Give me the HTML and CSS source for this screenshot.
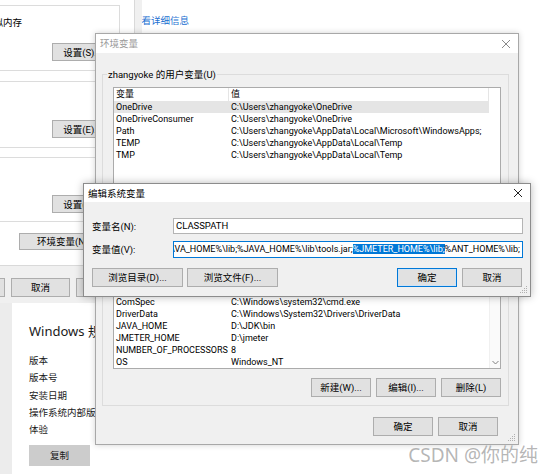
FILE: index.html
```html
<!DOCTYPE html>
<html lang="zh-CN">
<head>
<meta charset="utf-8">
<title>环境变量</title>
<link rel="stylesheet" href="styles.css">
</head>
<body>
<div class="settings">
  <div class="set-rail"></div>
  <div class="set-main">
    <span class="set-link">查看详细信息</span>
    <h2 class="set-h">Windows 规格</h2>
    <ul class="spec">
      <li>版本</li>
      <li>版本号</li>
      <li>安装日期</li>
      <li>操作系统内部版本</li>
      <li>体验</li>
    </ul>
    <div class="copy">复制</div>
  </div>
</div>

<div class="sysprops">
  <div class="sp-page">
    <div class="sp-group g1">
      <p class="sp-text">视觉效果，处理器计划，内存使用，以及虚拟内存</p>
      <div class="btn sp-btn">设置(S)...</div>
    </div>
    <div class="sp-group g2">
      <div class="btn sp-btn">设置(E)...</div>
    </div>
    <div class="sp-group g3">
      <div class="btn sp-btn">设置(T)...</div>
    </div>
    <div class="btn sp-env">环境变量(N)...</div>
  </div>
  <div class="sp-foot">
    <div class="btn">确定</div>
    <div class="btn">取消</div>
    <div class="btn">应用(A)</div>
  </div>
</div>

<div class="envdlg">
  <div class="titlebar inactive">
    <span class="ttl">环境变量</span>
    <svg class="close" width="10" height="10" viewBox="0 0 10 10"><path d="M1 1L9 9M9 1L1 9" stroke="#8a8a8a" stroke-width="1"/></svg>
  </div>
  <div class="env-body">
    <div class="grp user-grp">
      <span class="legend">zhangyoke 的用户变量(U)</span>
      <div class="lv">
        <div class="lv-row lv-head"><span class="c1">变量</span><span class="c2">值</span></div>
        <div class="lv-row sel"><span class="c1">OneDrive</span><span class="c2">C:\Users\zhangyoke\OneDrive</span></div>
        <div class="lv-row"><span class="c1">OneDriveConsumer</span><span class="c2">C:\Users\zhangyoke\OneDrive</span></div>
        <div class="lv-row"><span class="c1">Path</span><span class="c2">C:\Users\zhangyoke\AppData\Local\Microsoft\WindowsApps;</span></div>
        <div class="lv-row"><span class="c1">TEMP</span><span class="c2">C:\Users\zhangyoke\AppData\Local\Temp</span></div>
        <div class="lv-row"><span class="c1">TMP</span><span class="c2">C:\Users\zhangyoke\AppData\Local\Temp</span></div>
      </div>
    </div>
    <div class="grp sys-grp">
      <span class="legend">系统变量(S)</span>
      <div class="lv sys-lv">
        <div class="lv-rows">
          <div class="lv-row"><span class="c1">ANT_HOME</span><span class="c2">D:\ant</span></div>
          <div class="lv-row"><span class="c1">CLASSPATH</span><span class="c2">.;%JAVA_HOME%\lib;%JAVA_HOME%\lib\tools.jar;</span></div>
          <div class="lv-row"><span class="c1">ComSpec</span><span class="c2">C:\Windows\system32\cmd.exe</span></div>
          <div class="lv-row"><span class="c1">DriverData</span><span class="c2">C:\Windows\System32\Drivers\DriverData</span></div>
          <div class="lv-row"><span class="c1">JAVA_HOME</span><span class="c2">D:\JDK\bin</span></div>
          <div class="lv-row"><span class="c1">JMETER_HOME</span><span class="c2">D:\jmeter</span></div>
          <div class="lv-row"><span class="c1">NUMBER_OF_PROCESSORS</span><span class="c2">8</span></div>
          <div class="lv-row"><span class="c1">OS</span><span class="c2">Windows_NT</span></div>
        </div>
        <div class="vscroll">
          <svg width="7" height="5" viewBox="0 0 7 5"><path d="M0.5 1L3.5 4L6.5 1" fill="none" stroke="#808080" stroke-width="1"/></svg>
        </div>
      </div>
      <div class="btn-row">
        <div class="btn">新建(W)...</div>
        <div class="btn">编辑(I)...</div>
        <div class="btn">删除(L)</div>
      </div>
    </div>
    <div class="btn-row foot">
      <div class="btn">确定</div>
      <div class="btn">取消</div>
    </div>
  </div>
  <svg class="grip" width="9" height="9" viewBox="0 0 9 9"><g fill="#b0b0b0"><rect x="7" y="1" width="1" height="1"/><rect x="5" y="3" width="1" height="1"/><rect x="7" y="3" width="1" height="1"/><rect x="3" y="5" width="1" height="1"/><rect x="5" y="5" width="1" height="1"/><rect x="7" y="5" width="1" height="1"/><rect x="1" y="7" width="1" height="1"/><rect x="3" y="7" width="1" height="1"/><rect x="5" y="7" width="1" height="1"/><rect x="7" y="7" width="1" height="1"/></g></svg>
</div>

<div class="editdlg">
  <div class="titlebar active">
    <span class="ttl">编辑系统变量</span>
    <svg class="close" width="10" height="10" viewBox="0 0 10 10"><path d="M1 1L9 9M9 1L1 9" stroke="#222" stroke-width="1"/></svg>
  </div>
  <div class="edit-body">
    <div class="field">
      <label class="flabel">变量名(N):</label>
      <div class="input">CLASSPATH</div>
    </div>
    <div class="field">
      <label class="flabel">变量值(V):</label>
      <div class="input focus"><span class="val">.;%JAVA_HOME%\lib;%JAVA_HOME%\lib\tools.jar;<span class="hl">%JMETER_HOME%\lib;</span>%ANT_HOME%\lib;</span></div>
    </div>
    <div class="edit-btns">
      <div class="btn wide">浏览目录(D)...</div>
      <div class="btn wide">浏览文件(F)...</div>
      <div class="spacer"></div>
      <div class="btn default">确定</div>
      <div class="btn">取消</div>
    </div>
  </div>
  <svg class="grip" width="9" height="9" viewBox="0 0 9 9"><g fill="#b0b0b0"><rect x="7" y="1" width="1" height="1"/><rect x="5" y="3" width="1" height="1"/><rect x="7" y="3" width="1" height="1"/><rect x="3" y="5" width="1" height="1"/><rect x="5" y="5" width="1" height="1"/><rect x="7" y="5" width="1" height="1"/><rect x="1" y="7" width="1" height="1"/><rect x="3" y="7" width="1" height="1"/><rect x="5" y="7" width="1" height="1"/><rect x="7" y="7" width="1" height="1"/></g></svg>
</div>

<div class="watermark">CSDN @你的纯</div>
</body>
</html>
```

FILE: styles.css
```css
* { box-sizing: border-box; margin: 0; padding: 0; }
html, body { width: 554px; height: 474px; overflow: hidden; background: #fff; }
body {
  position: relative;
  font-family: Roboto, "Noto Sans CJK SC", sans-serif;
  font-size: 9.5px;
  color: #000;
  line-height: 13px;
}

/* generic button */
.btn {
  display: flex;
  align-items: center;
  justify-content: center;
  height: 19px;
  background: #e1e1e1;
  border: 1px solid #adadad;
  white-space: nowrap;
  color: #000;
}

/* ---------- Settings window (background) ---------- */
.settings {
  position: absolute;
  left: 0; top: 0;
  width: 554px; height: 474px;
  display: flex;
  background: #fff;
}
.set-rail { width: 12px; background: #ececec; }
.set-main {
  display: flex;
  flex-direction: column;
  align-items: flex-start;
  padding: 14px 0 0 17px;
}
.set-link { margin-left: 103px; color: #1a6fd1; font-size: 9.5px; line-height: 13px; }
.set-h {
  margin-top: 295px;
  font-family: "Noto Sans", "Noto Sans CJK SC", sans-serif;
  font-weight: 400;
  font-size: 13px;
  line-height: 18px;
  color: #1a1a1a;
}
.spec { list-style: none; margin-top: 12px; }
.spec li { line-height: 17.3px; font-size: 9.5px; color: #1a1a1a; }
.copy {
  margin-top: 7px;
  width: 61px; height: 21px;
  background: #cccccc;
  display: flex; align-items: center; justify-content: center;
  font-size: 9.5px; color: #1a1a1a;
}

/* ---------- System properties dialog ---------- */
.sysprops {
  position: absolute;
  left: -200px; top: 0;
  width: 342px; height: 303px;
  background: #f0f0f0;
  display: flex;
  flex-direction: column;
  padding: 0 7px 0 6px;
}
.sp-page {
  background: #fff;
  border-right: 1px solid #d9d9d9;
  border-bottom: 1px solid #d9d9d9;
  height: 266px;
  padding: 5px 14px 0 7px;
  display: flex;
  flex-direction: column;
}
.sp-group {
  border: 1px solid #dcdcdc;
  display: flex;
  flex-direction: column;
  align-items: flex-end;
  padding: 0 6px 0 12px;
}
.sp-text { align-self: flex-start; line-height: 13px; white-space: nowrap; margin-left: -13px; }
.g1 { height: 66px; padding-top: 10px; }
.g1 .sp-btn { margin-top: 14px; }
.g2 { height: 67px; margin-top: 10px; padding-top: 38px; }
.g3 { height: 65px; margin-top: 9px; padding-top: 37px; }
.sp-btn { width: 61px; height: 18px; }
.sp-env { margin-top: 11px; width: 95px; height: 17px; margin-left: 206px; }
.sp-foot {
  display: flex;
  gap: 6px;
  padding-left: 140px;
  margin-top: 12px;
}
.sp-foot .btn { width: 60px; height: 19px; }

/* ---------- shared window chrome ---------- */
.titlebar {
  display: flex;
  align-items: center;
  justify-content: space-between;
  background: #fff;
}
.titlebar .ttl { font-size: 9.5px; }
.titlebar.inactive .ttl { color: #9a9a9a; }
.grip { position: absolute; right: 2px; bottom: 2px; }

/* ---------- Environment variables dialog ---------- */
.envdlg {
  position: absolute;
  left: 95px; top: 33px;
  width: 424px; height: 412px;
  background: #f0f0f0;
  border: 1px solid #a8a8a8;
  box-shadow: 0 0 6px rgba(0,0,0,0.18);
  display: flex;
  flex-direction: column;
}
.envdlg .titlebar { height: 19px; padding: 0 7px 0 4px; }
.env-body {
  flex: 1;
  display: flex;
  flex-direction: column;
  padding: 21px 9px 8px 6px;
}
.grp {
  position: relative;
  border: 1px solid #dcdcdc;
  padding: 12px 7px 8px 10px;
  display: flex;
  flex-direction: column;
}
.legend {
  position: absolute;
  left: 4px; top: -7px;
  padding: 0 1px;
  background: #f0f0f0;
  line-height: 13px;
  white-space: nowrap;
}
.user-grp { height: 132px; }
.sys-grp { height: 191px; margin-top: 9px; }

.lv {
  background: #fff;
  border: 1px solid #ababab;
  overflow: hidden;
  font-size: 9px;
}
.user-grp .lv { flex: 1; }
.lv-row {
  display: flex;
  height: 12px;
  line-height: 12px;
  width: 375px;
  white-space: nowrap;
}
.lv-row .c1 { width: 115px; padding-left: 2px; overflow: hidden; }
.lv-row .c2 { width: 260px; padding-left: 2px; overflow: hidden; }
.lv-head { height: 13px; line-height: 13px; }
.lv-head .c1 { border-right: 1px solid #e5e5e5; }
.lv-head .c2 { border-right: 1px solid #e5e5e5; }
.lv-row.sel { background: #e5e5e5; }

.sys-lv {
  flex: 1;
  display: flex;
  position: relative;
}
.lv-rows {
  flex: 1;
  display: flex;
  flex-direction: column;
  justify-content: flex-end;
  overflow: hidden;
}
.vscroll {
  width: 11px;
  border-left: 1px solid #f0f0f0;
  background: #fafafa;
  display: flex;
  flex-direction: column;
  justify-content: flex-end;
  align-items: center;
  padding-bottom: 3px;
}

.btn-row {
  display: flex;
  justify-content: flex-end;
  gap: 5px;
  margin-top: 9px;
}
.btn-row .btn { width: 60px; }
.btn-row.foot { margin-top: 11px; padding-right: 11px; }

/* ---------- Edit system variable dialog ---------- */
.editdlg {
  position: absolute;
  left: 83px; top: 183px;
  width: 448px; height: 114px;
  background: #f0f0f0;
  border: 1px solid #8c8c8c;
  box-shadow: 0 0 8px rgba(0,0,0,0.28);
  display: flex;
  flex-direction: column;
}
.editdlg .titlebar { height: 18px; padding: 0 7px 0 4px; }
.edit-body {
  flex: 1;
  display: flex;
  flex-direction: column;
  padding: 16px 7px 9px 8px;
}
.field { display: flex; align-items: center; }
.field + .field { margin-top: 7px; }
.flabel { width: 81px; }
.input {
  flex: 1;
  height: 16px;
  background: #fff;
  border: 1px solid #b4b4b4;
  padding: 0 2px;
  line-height: 14px;
  white-space: nowrap;
  overflow: hidden;
}
.input.focus {
  height: 17px;
  border-color: #0078d7;
  display: flex;
  justify-content: flex-end;
  padding: 0 2px 0 0;
  font-size: 9px;
  line-height: 15px;
}
.val { white-space: nowrap; }
.hl { background: #0078d7; color: #fff; }
.edit-btns {
  display: flex;
  gap: 5px;
  margin-top: 10px;
  padding-right: 1px;
}
.edit-btns .btn { width: 60px; }
.edit-btns .btn.wide { width: 91px; }
.edit-btns .btn.wide + .btn.wide { margin-left: -1px; }
.spacer { flex: 1; }
.btn.default { border-color: #0078d7; box-shadow: inset 0 0 0 1px #cfe3f5; }

/* ---------- watermark ---------- */
.watermark {
  position: absolute;
  right: 16px; top: 443px;
  font-family: "Noto Sans", "Noto Sans CJK SC", sans-serif;
  font-size: 19px;
  line-height: 24px;
  color: rgba(150,150,150,0.7);
  white-space: nowrap;
}
```
